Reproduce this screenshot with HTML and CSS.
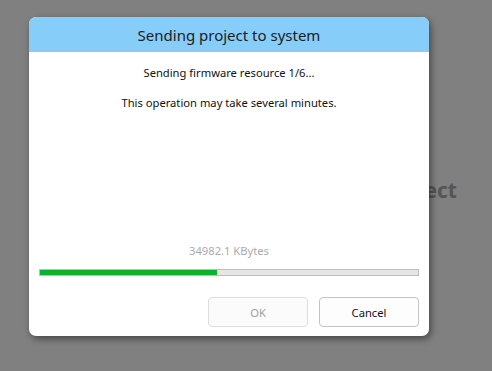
FILE: index.html
```html
<!DOCTYPE html>
<html lang="en">
<head>
    <meta charset="UTF-8">
    <meta name="viewport" content="width=device-width, initial-scale=1.0">
    <title>Sending project to system</title>
    <link rel="stylesheet" href="styles.css">
</head>
<body>

    <!-- page behind the dialog -->
    <div class="page">
        <h2 class="page-title">Project</h2>
    </div>

    <div class="dialog">
        <div class="dialog-header">Sending project to system</div>
        <div class="dialog-body">
            <p class="msg">Sending firmware resource 1/6...</p>
            <p class="msg">This operation may take several minutes.</p>
            <div class="spacer"></div>
            <p class="size">34982.1 KBytes</p>
            <div class="progress">
                <div class="progress-fill" style="width: 46.8%"></div>
            </div>
            <div class="buttons">
                <button class="btn" disabled>OK</button>
                <button class="btn">Cancel</button>
            </div>
        </div>
    </div>

</body>
</html>
```

FILE: styles.css
```css
/* GENERAL */
body {
    margin: 0;
    height: 371px;
    background-color: #808080;
    font-family: "Noto Sans", "Open Sans", sans-serif;
    overflow: hidden;
    position: relative;
}

.page {
    display: flex;
    justify-content: flex-end;
    padding: 176px 35px 0 0;
}

.page-title {
    margin: 0;
    font-size: 21px;
    font-weight: bold;
    color: #555;
}

/* DIALOG */
.dialog {
    position: absolute;
    left: 29px;
    top: 17px;
    width: 400px;
    height: 319px;
    background: #fff;
    border-radius: 7px;
    box-shadow: 2px 3px 7px rgba(0,0,0,0.45);
    display: flex;
    flex-direction: column;
    overflow: hidden;
}

.dialog-header {
    height: 35px;
    background: #87cdf9;
    color: #1c1c1c;
    font-size: 15px;
    display: flex;
    align-items: center;
    justify-content: center;
}

.dialog-body {
    flex: 1;
    display: flex;
    flex-direction: column;
    padding: 12px 10px 9px;
}

.msg {
    margin: 0 0 12px;
    font-size: 11.2px;
    line-height: 18px;
    text-align: center;
    color: #111;
}

.spacer { flex: 1; }

.size {
    margin: 0 0 9px;
    font-size: 11.2px;
    line-height: 18px;
    text-align: center;
    color: #acacac;
}

/* PROGRESS BAR */
.progress {
    height: 5px;
    border: 1px solid #bdbdbd;
    background: #e6e6e6;
}

.progress-fill {
    height: 100%;
    background: #0fb02b;
}

/* BUTTONS */
.buttons {
    display: flex;
    justify-content: flex-end;
    gap: 11px;
    margin-top: 21px;
}

.btn {
    width: 100px;
    height: 30px;
    border: 1px solid #c4c4c4;
    border-radius: 4px;
    background: #fdfdfd;
    font-family: inherit;
    font-size: 11.2px;
    color: #111;
}

.btn:disabled {
    border-color: #dedede;
    color: #a0a0a0;
    background: #fbfbfb;
}
```
